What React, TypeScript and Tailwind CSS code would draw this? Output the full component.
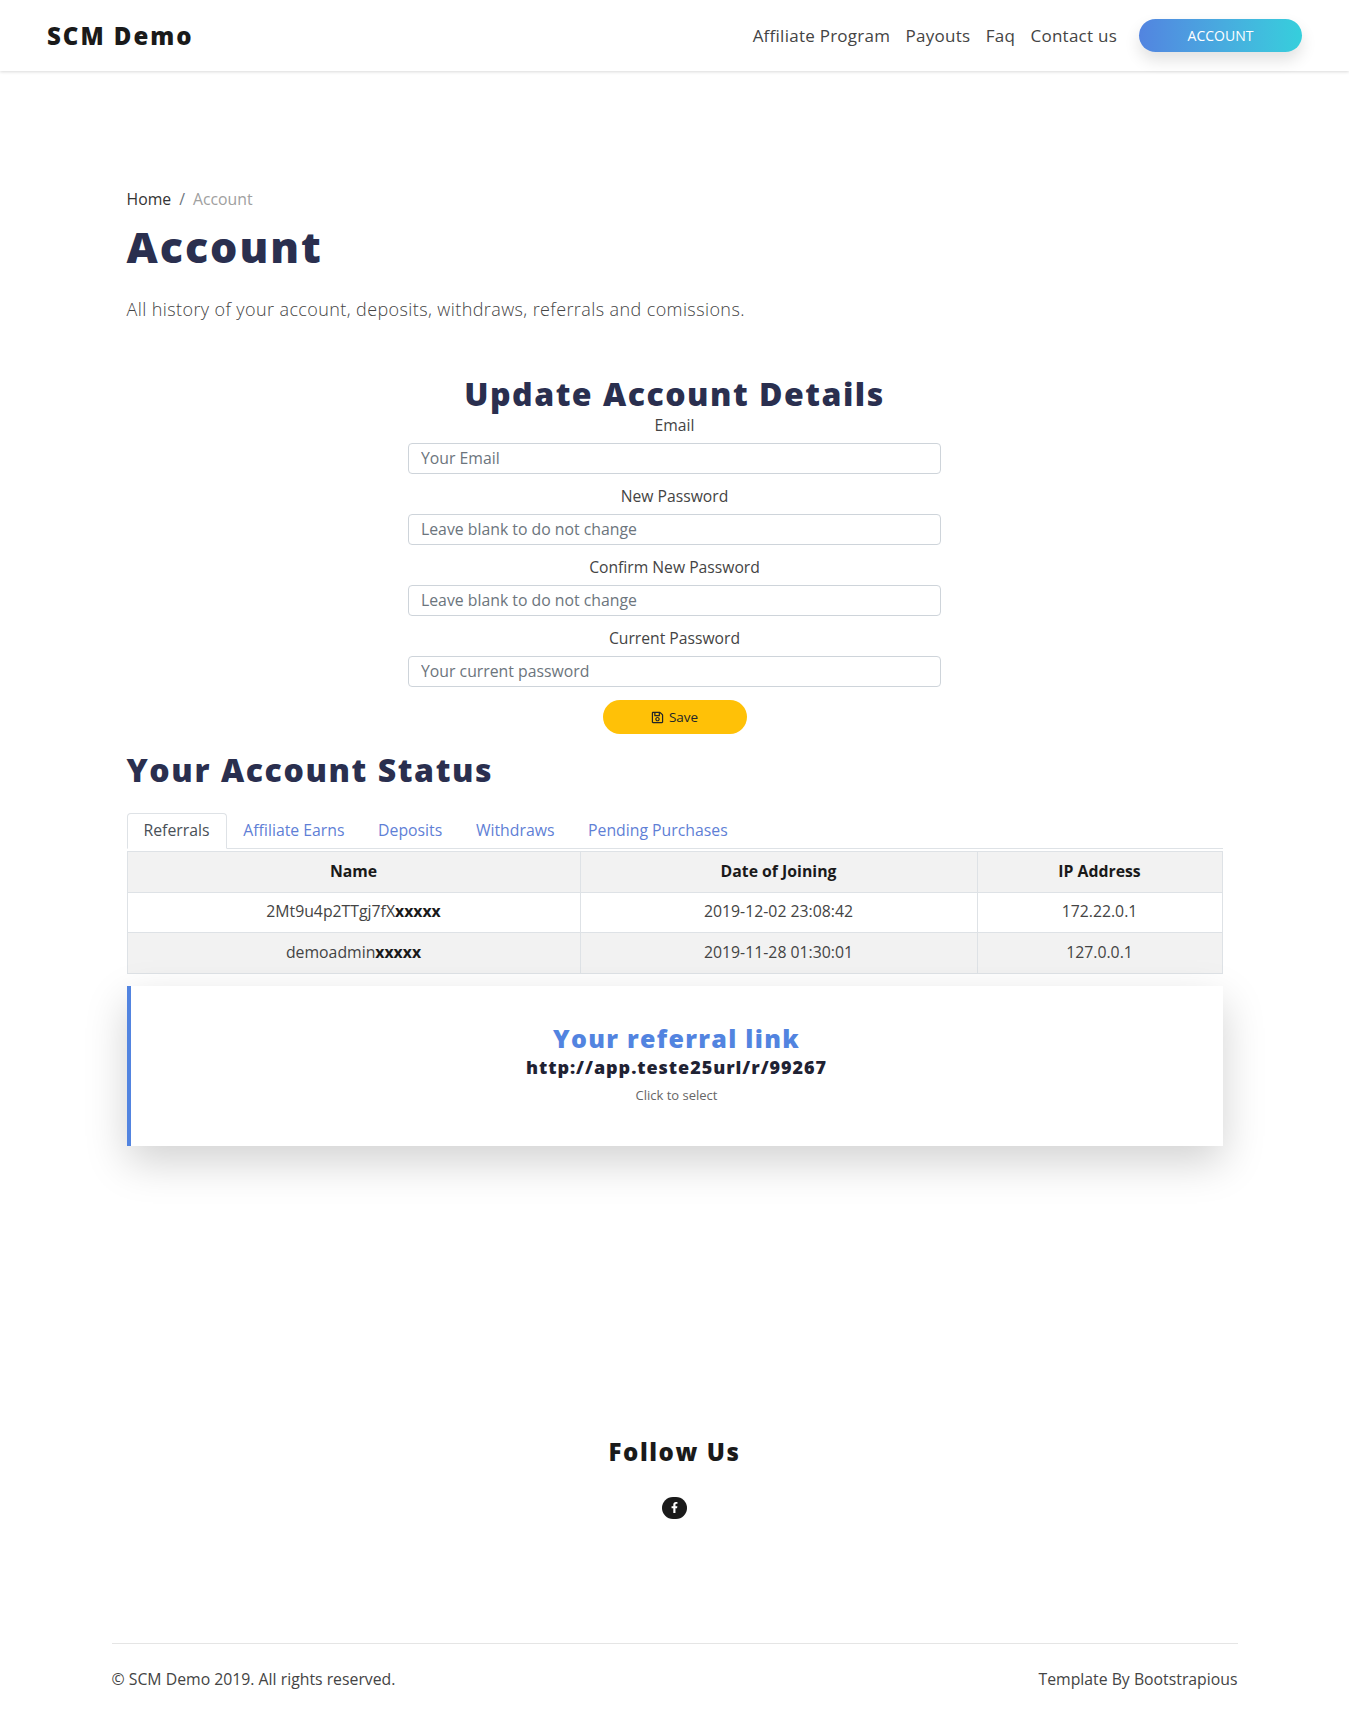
import React from "react";
import { FaFacebookF, FaRegSave } from "react-icons/fa";

const Field = ({ label, placeholder }: { label: string; placeholder: string }) => (
  <div className="mb-[10px] text-center">
    <label className="block h-[24px] mb-[6px] text-[15.7px] leading-[24px] text-[#444]">{label}</label>
    <input
      placeholder={placeholder}
      className="block w-full h-[31px] rounded-[4px] border border-[#ced4da] bg-white px-[12px] pb-[2px] text-[15.8px] text-[#495057] placeholder:text-[#6c757d]"
    />
  </div>
);

const tabs = ["Affiliate Earns", "Deposits", "Withdraws", "Pending Purchases"];

const Row = ({ name, x, date, ip, shaded }: { name: string; x: string; date: string; ip: string; shaded?: boolean }) => (
  <tr className={shaded ? "bg-[#f2f2f2]" : "bg-white"}>
    <td className="h-[40.5px] border border-[#dee2e6] text-center">
      {name}
      <b className="font-bold text-[#1a1a1a]">{x}</b>
    </td>
    <td className="border border-[#dee2e6] text-center">{date}</td>
    <td className="border border-[#dee2e6] text-center">{ip}</td>
  </tr>
);

export default function App() {
  return (
    <div className="min-h-[1716px] bg-white text-[#444] font-['Open_Sans',sans-serif]">
      <nav className="flex h-[71px] items-center justify-between pl-[47px] pr-[47px] shadow-[0_1px_3px_rgba(0,0,0,0.15)]">
        <a className="text-[24px] font-extrabold tracking-[2px] text-[#1a1a1a]">SCM Demo</a>
        <div className="flex items-center">
          <div className="flex gap-[15.4px] text-[17px] tracking-[0.25px] text-[#444]">
            <a>Affiliate Program</a>
            <a>Payouts</a>
            <a>Faq</a>
            <a>Contact us</a>
          </div>
          <a className="ml-[22px] flex h-[33px] w-[163px] items-center justify-center rounded-full bg-gradient-to-r from-[#5284e0] to-[#35cfdc] text-[14px] font-medium text-white shadow-[0_8px_16px_rgba(0,0,0,0.12)]">
            ACCOUNT
          </a>
        </div>
      </nav>

      <main className="mx-auto w-[1096px] pt-[116px]">
        <div className="flex h-[24px] items-center text-[15.8px] leading-[24px]">
          <span className="text-[#333]">Home</span>
          <span className="mx-[8px] text-[#6c757d]">/</span>
          <span className="text-[#a0a0a0]">Account</span>
        </div>
        <h1 className="mt-[10px] text-[43px] font-extrabold leading-[52px] text-[#2a2f4f] tracking-[2px]">Account</h1>
        <p className="mt-[23px] text-[18px] font-light leading-[26px] tracking-[0.4px] text-[#444]">
          All history of your account, deposits, withdraws, referrals and comissions.
        </p>

        <section className="mx-auto mt-[52px] w-[533px]">
          <h2 className="text-center text-[32px] font-extrabold leading-[40px] tracking-[1.5px] text-[#2a2f4f]">Update Account Details</h2>
          <div className="-mt-[1px]">
            <Field label="Email" placeholder="Your Email" />
            <Field label="New Password" placeholder="Leave blank to do not change" />
            <Field label="Confirm New Password" placeholder="Leave blank to do not change" />
            <Field label="Current Password" placeholder="Your current password" />
          </div>
          <button className="mx-auto mt-[13px] flex h-[34px] w-[144px] items-center justify-center gap-[5px] rounded-full bg-[#ffc107] text-[13.5px] text-[#212529]">
            <FaRegSave className="text-[13px]" />
            Save
          </button>
        </section>

        <h2 className="mt-[16px] text-[32px] font-extrabold leading-[40px] tracking-[1.6px] text-[#2a2f4f]">Your Account Status</h2>

        <div className="mt-[23px] flex h-[36px] border-b border-[#dee2e6] text-[15.8px]">
          <a className="flex h-[36px] items-center rounded-t-[4px] border border-b-white border-[#dee2e6] bg-white px-[16px] text-[#495057]">Referrals</a>
          {tabs.map((t) => (
            <a key={t} className="flex h-[35px] items-center px-[16.8px] text-[#5f7fd6]">{t}</a>
          ))}
        </div>

        <table className="mt-[2px] w-full table-fixed border-collapse text-[15.8px]">
          <colgroup>
            <col className="w-[453px]" />
            <col className="w-[397px]" />
            <col />
          </colgroup>
          <thead>
            <tr className="bg-[#f2f2f2] text-[#1a1a1a]">
              <th className="h-[40.5px] border border-[#dee2e6] font-bold">Name</th>
              <th className="border border-[#dee2e6] font-bold">Date of Joining</th>
              <th className="border border-[#dee2e6] font-bold">IP Address</th>
            </tr>
          </thead>
          <tbody>
            <Row name="2Mt9u4p2TTgj7fX" x="xxxxx" date="2019-12-02 23:08:42" ip="172.22.0.1" />
            <Row name="demoadmin" x="xxxxx" date="2019-11-28 01:30:01" ip="127.0.0.1" shaded />
          </tbody>
        </table>

        <div className="mt-[12px] flex h-[160px] flex-col items-center border-l-[4px] border-[#5284e0] bg-white pt-[36px] shadow-[0_16px_40px_rgba(0,0,0,0.18)]">
          <h3 className="text-[25px] font-extrabold leading-[32px] tracking-[1.3px] text-[#5284e0]">Your referral link</h3>
          <div className="mt-[2px] text-[18px] font-extrabold leading-[22px] tracking-[0.95px] text-[#1f2233]">http://app.teste25url/r/99267</div>
          <small className="mt-[8px] text-[13px] leading-[18px] text-[#666]">Click to select</small>
        </div>
      </main>

      <section className="mt-[290px] flex flex-col items-center">
        <h4 className="text-[24px] font-extrabold leading-[32px] tracking-[1.6px] text-[#1a1a1a]">Follow Us</h4>
        <a className="mt-[29px] flex h-[22px] w-[25px] items-center justify-center rounded-full bg-[#1a1a1a] text-[11px] text-white">
          <FaFacebookF />
        </a>
      </section>

      <footer className="mx-auto mt-[124px] flex h-[73px] w-[1126px] items-center justify-between border-t border-[#e5e5e5] text-[15.8px] text-[#444]">
        <span>© SCM Demo 2019. All rights reserved.</span>
        <span>Template By Bootstrapious</span>
      </footer>
    </div>
  );
}
